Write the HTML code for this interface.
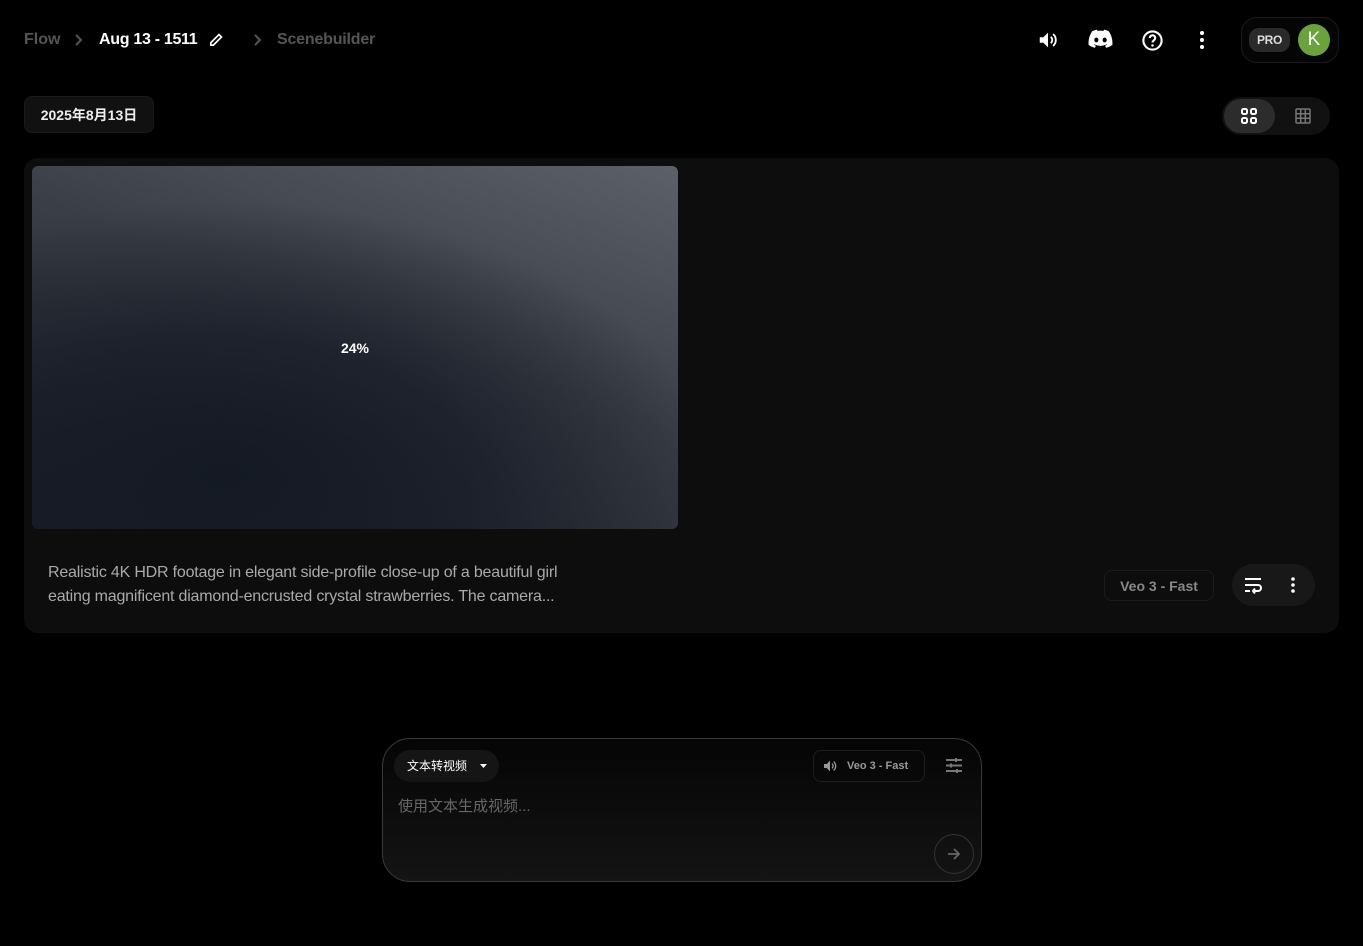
<!DOCTYPE html>
<html><head><meta charset="utf-8"><style>
*{box-sizing:border-box;margin:0;padding:0}
body{width:1363px;height:946px;background:#000;font-family:"Liberation Sans","Noto Sans CJK SC",sans-serif;color:#fff;position:relative;overflow:hidden}
.a{position:absolute}
.ic{position:absolute;display:flex;align-items:center;justify-content:center}
</style></head><body>
<div class="a" style="left:24px;top:31px;font-size:16px;color:#555;font-weight:600">Flow</div>
<svg class="a" style="left:70px;top:32px" width="16" height="16" viewBox="0 0 16 16"><path d="M6 3l5 5-5 5" stroke="#555" stroke-width="2" fill="none"/></svg>
<div class="a" style="left:99px;top:31px;font-size:16px;font-weight:700;color:#fff;letter-spacing:-0.3px">Aug 13 - 1511</div>
<svg class="a" style="left:209px;top:32px" width="15" height="15" viewBox="0 0 24 24"><path d="M3 21v-4L16 4l4 4L7 21z" stroke="#fff" stroke-width="2.6" fill="none"/></svg>
<svg class="a" style="left:249px;top:32px" width="16" height="16" viewBox="0 0 16 16"><path d="M6 3l5 5-5 5" stroke="#555" stroke-width="2" fill="none"/></svg>
<div class="a" style="left:277px;top:31px;font-size:16px;color:#555;font-weight:600;letter-spacing:-0.2px">Scenebuilder</div>

<svg class="a" style="left:1037px;top:29px" width="22" height="22" viewBox="0 0 24 24"><path d="M3 9v6h4l5 5V4L7 9z" fill="#fff"/><path d="M15 8.5a4.5 4.5 0 010 7M17.5 5.5a8.5 8.5 0 010 13" stroke="#fff" stroke-width="2" fill="none"/></svg>
<svg class="a" style="left:1088px;top:29px" width="25" height="20" viewBox="0 0 24 19"><path d="M20 2A19 19 0 0015.5.5l-.6 1.2a17 17 0 00-5.8 0L8.5.5A19 19 0 004 2C1 6.5.3 11 .6 15.3A19 19 0 006.5 18l1.2-2a12 12 0 01-2-1l.5-.4a13 13 0 0011.6 0l.5.4a12 12 0 01-2 1l1.2 2a19 19 0 005.9-2.7C23.8 10.3 22.6 6 20 2zM8 12.7c-1.1 0-2-1-2-2.3S6.9 8.2 8 8.2s2 1 2 2.2-.9 2.3-2 2.3zm8 0c-1.1 0-2-1-2-2.3s.9-2.2 2-2.2 2 1 2 2.2-.9 2.3-2 2.3z" fill="#fff"/></svg>
<svg class="a" style="left:1141px;top:29px" width="23" height="23" viewBox="0 0 24 24"><circle cx="12" cy="12" r="9.5" stroke="#fff" stroke-width="2.2" fill="none"/><path d="M9.2 9.5a2.8 2.8 0 115 1.6c-1 1-2.2 1.4-2.2 3" stroke="#fff" stroke-width="2.2" fill="none"/><circle cx="12" cy="17.2" r="1.3" fill="#fff"/></svg>
<svg class="a" style="left:1196px;top:30px" width="12" height="20" viewBox="0 0 12 20"><circle cx="6" cy="3" r="2" fill="#fff"/><circle cx="6" cy="10" r="2" fill="#fff"/><circle cx="6" cy="17" r="2" fill="#fff"/></svg>
<div class="a" style="left:1241px;top:17px;width:98px;height:46px;border-radius:16px;border:1px solid #1a1a1a;background:#050505"></div>
<div class="ic" style="left:1249px;top:28px;width:41px;height:24px;border-radius:10px;background:#2a2a2a;font-size:12px;font-weight:700;color:#ddd;letter-spacing:-0.3px">PRO</div>
<div class="ic" style="left:1298px;top:24px;width:32px;height:32px;border-radius:50%;background:#6aa23b;font-size:19px;color:#fff">K</div>

<div class="ic" style="left:24px;top:96px;width:130px;height:37px;border-radius:8px;background:#111;border:1px solid #1a1a1a;font-size:14px;font-weight:700;color:#eee">2025年8月13日</div>
<div class="a" style="left:1222px;top:97px;width:108px;height:38px;border-radius:19px;background:#111"></div>
<div class="a" style="left:1224px;top:99px;width:51px;height:34px;border-radius:17px;background:#2c2c2c"></div>
<svg class="a" style="left:1240px;top:107px" width="18" height="18" viewBox="0 0 18 18"><g stroke="#fff" stroke-width="2" fill="none"><rect x="2" y="2" width="5" height="5" rx="1.5"/><rect x="11" y="2" width="5" height="5" rx="1.5"/><rect x="2" y="11" width="5" height="5" rx="1.5"/><rect x="11" y="11" width="5" height="5" rx="1.5"/></g></svg>
<svg class="a" style="left:1295px;top:108px" width="16" height="16" viewBox="0 0 16 16"><g stroke="#777" stroke-width="1.5" fill="none"><rect x="1" y="1" width="14" height="14" rx="1"/><path d="M5.7 1v14M10.3 1v14M1 5.7h14M1 10.3h14"/></g></svg>

<div class="a" style="left:24px;top:158px;width:1315px;height:475px;border-radius:14px;background:#0d0d0d"></div>
<div class="ic" style="left:32px;top:166px;width:646px;height:363px;border-radius:6px;background:radial-gradient(ellipse 75% 75% at 30% 85%,#141924 0%,rgba(20,25,36,0.7) 50%,rgba(20,25,36,0) 100%),linear-gradient(200deg,#5c6068 0%,#3a3e46 45%,#1b1f28 100%);font-size:14px;font-weight:700">24%</div>
<div class="a" style="left:48px;top:561px;font-size:16px;line-height:24px;color:#aaa;width:545px;letter-spacing:-0.2px">Realistic 4K HDR footage in elegant side-profile close-up of a beautiful girl eating magnificent diamond-encrusted crystal strawberries. The camera...</div>
<div class="ic" style="left:1104px;top:570px;width:110px;height:31px;border-radius:8px;border:1px solid #1c1c1c;font-size:14px;font-weight:700;color:#888">Veo 3 - Fast</div>
<div class="a" style="left:1232px;top:564px;width:83px;height:42px;border-radius:21px;background:#181818"></div>
<svg class="a" style="left:1244px;top:576px" width="19" height="18" viewBox="0 0 19 18"><g stroke="#fff" stroke-width="2" fill="none"><path d="M1 3h16M1 9h13a3 3 0 010 6h-4M1 15h5"/><path d="M11 12.5l-2 2.5 2 2.5"/></g></svg>
<svg class="a" style="left:1287px;top:576px" width="12" height="18" viewBox="0 0 12 18"><circle cx="6" cy="3" r="1.8" fill="#fff"/><circle cx="6" cy="9" r="1.8" fill="#fff"/><circle cx="6" cy="15" r="1.8" fill="#fff"/></svg>

<div class="a" style="left:382px;top:738px;width:600px;height:144px;border-radius:28px;border:1px solid #3a3a3a;background:linear-gradient(180deg,#050505,#141414)"></div>
<div class="a" style="left:394px;top:750px;width:105px;height:32px;border-radius:16px;background:#151515"></div>
<div class="a" style="left:407px;top:757px;font-size:12px;color:#fff">文本转视频</div>
<svg class="a" style="left:479px;top:763px" width="9" height="6" viewBox="0 0 9 6"><path d="M1 1h7L4.5 5z" fill="#fff"/></svg>
<div class="a" style="left:813px;top:750px;width:112px;height:32px;border-radius:8px;border:1px solid #1e1e1e;background:#080808"></div>
<svg class="a" style="left:822px;top:758px" width="16" height="16" viewBox="0 0 24 24"><path d="M3 9v6h4l5 5V4L7 9z" fill="#999"/><path d="M15 8.5a4.5 4.5 0 010 7M17.5 5.5a8.5 8.5 0 010 13" stroke="#999" stroke-width="2" fill="none"/></svg>
<div class="a" style="left:847px;top:760px;font-size:11px;font-weight:700;color:#999">Veo 3 - Fast</div>
<svg class="a" style="left:945px;top:757px" width="18" height="17" viewBox="0 0 18 17"><g stroke="#777" stroke-width="2"><path d="M1 3h16M1 8.5h16M1 14h16"/><path d="M11 1v4M6 6.5v4M12 12v4"/></g></svg>
<div class="a" style="left:398px;top:795px;font-size:15px;color:#666">使用文本生成视频...</div>
<div class="ic" style="left:934px;top:834px;width:40px;height:40px;border-radius:50%;border:1px solid #333"><svg width="14" height="14" viewBox="0 0 14 14"><path d="M1 7h11M7 2l5 5-5 5" stroke="#666" stroke-width="1.8" fill="none"/></svg></div>
</body></html>
